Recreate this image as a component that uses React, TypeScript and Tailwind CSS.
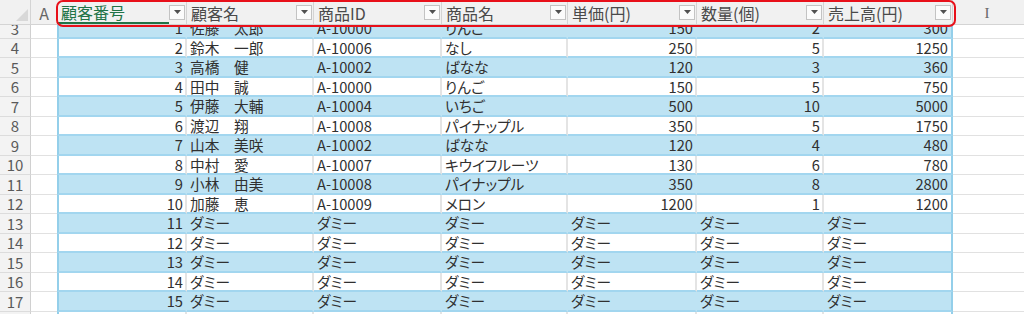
import React from "react";

type Col = { label: string; w: number; num: boolean };

const cols: Col[] = [
  { label: "顧客番号", w: 130, num: true },
  { label: "顧客名", w: 127, num: false },
  { label: "商品ID", w: 128, num: false },
  { label: "商品名", w: 126, num: false },
  { label: "単価(円)", w: 129, num: true },
  { label: "数量(個)", w: 127, num: true },
  { label: "売上高(円)", w: 129, num: true },
];

const data: (string | number)[][] = [
  [1, "佐藤　太郎", "A-10000", "りんご", 150, 2, 300],
  [2, "鈴木　一郎", "A-10006", "なし", 250, 5, 1250],
  [3, "高橋　健", "A-10002", "ばなな", 120, 3, 360],
  [4, "田中　誠", "A-10000", "りんご", 150, 5, 750],
  [5, "伊藤　大輔", "A-10004", "いちご", 500, 10, 5000],
  [6, "渡辺　翔", "A-10008", "パイナップル", 350, 5, 1750],
  [7, "山本　美咲", "A-10002", "ばなな", 120, 4, 480],
  [8, "中村　愛", "A-10007", "キウイフルーツ", 130, 6, 780],
  [9, "小林　由美", "A-10008", "パイナップル", 350, 8, 2800],
  [10, "加藤　恵", "A-10009", "メロン", 1200, 1, 1200],
  [11, "ダミー", "ダミー", "ダミー", "ダミー", "ダミー", "ダミー"],
  [12, "ダミー", "ダミー", "ダミー", "ダミー", "ダミー", "ダミー"],
  [13, "ダミー", "ダミー", "ダミー", "ダミー", "ダミー", "ダミー"],
  [14, "ダミー", "ダミー", "ダミー", "ダミー", "ダミー", "ダミー"],
  [15, "ダミー", "ダミー", "ダミー", "ダミー", "ダミー", "ダミー"],
];

const FONT =
  "[font-family:'Noto_Sans_CJK_JP','Noto_Sans',sans-serif] [font-feature-settings:'palt']";

function DropButton() {
  return (
    <div className="mr-[1px] flex h-[15px] w-[16px] shrink-0 items-center justify-center border border-[#c3c3c3] bg-[#fbfbfb]">
      <svg width="7" height="4" viewBox="0 0 7 4">
        <path d="M0 0 L7 0 L3.5 4 Z" fill="#505050" />
      </svg>
    </div>
  );
}

function HeaderRow() {
  return (
    <div className="relative z-10 flex h-[25px] shrink-0 border-b border-[#d4d4d4] bg-[#f1f1f1]">
      <div className="flex w-[31px] shrink-0 items-end justify-end border-r border-[#d4d4d4] pb-[3px] pr-[2px]">
        <svg width="12" height="12" viewBox="0 0 12 12">
          <path d="M12 0 L12 12 L0 12 Z" fill="#d8d8d8" />
        </svg>
      </div>
      <div className="flex w-[26px] shrink-0 items-center justify-center pt-[1px] text-[16px] text-[#666]">
        A
      </div>
      {cols.map((c, i) => (
        <div
          key={c.label}
          style={{ width: c.w }}
          className="flex shrink-0 items-center border-r border-[#d4d4d4]"
        >
          <div
            className={
              "flex h-full min-w-0 flex-1 items-center pl-[4px] pt-[2px] text-[16px] leading-none " +
              (i === 0
                ? "border-b-2 border-[#217346] text-[#217346]"
                : "text-[#4a4a4a]")
            }
          >
            {c.label}
          </div>
          <DropButton />
        </div>
      ))}
      <div className="flex w-[68px] shrink-0 items-center justify-center pt-[2px] [font-family:'Liberation_Serif',serif] text-[15px] text-[#666]">
        I
      </div>
      <div className="flex-1" />
    </div>
  );
}

function BodyRow({
  n,
  cells,
  blue,
}: {
  n: number;
  cells: (string | number)[] | null;
  blue: boolean;
}) {
  return (
    <div className="flex h-[19.5px] shrink-0">
      <div className="flex w-[31px] shrink-0 items-center justify-center border-b border-r border-[#dcdcdc] border-r-[#d0d0d0] bg-[#f3f3f3] text-[15px] leading-none text-[#5a5a5a]">
        {cells ? n : ""}
      </div>
      <div className="w-[26px] shrink-0 border-b border-[#e1e1e1] bg-white" />
      {cols.map((c, i) => {
        const v = cells ? cells[i] : "";
        const isNum = typeof v === "number";
        const first = i === 0;
        const last = i === cols.length - 1;
        return (
          <div
            key={i}
            style={{ width: c.w }}
            className={
              "flex shrink-0 items-center whitespace-nowrap border-b-2 border-r-2 border-b-[#a2d6ef] text-[14.7px] leading-none text-[#303030] " +
              (blue ? "bg-[#bee3f3] " : "bg-white ") +
              (last
                ? "border-r-[#94cfea] pr-[3px] "
                : blue
                ? "border-r-transparent pr-[2px] "
                : "border-r-[#e4e4e4] pr-[2px] ") +
              (first ? "border-l-2 border-l-[#94cfea] " : "") +
              (isNum ? "justify-end" : "justify-start pl-[3px]")
            }
          >
            <span className="pt-[2px]">{v}</span>
          </div>
        );
      })}
      <div className="flex-1 border-b border-[#e1e1e1] bg-white" />
    </div>
  );
}

export default function App() {
  return (
    <div
      className={
        "relative flex h-[314px] w-[1024px] flex-col overflow-hidden bg-white " +
        FONT
      }
    >
      <HeaderRow />
      <div className="flex min-h-0 flex-1 flex-col overflow-hidden">
        <div className="-mt-[6px] flex flex-col">
          {data.map((r, i) => (
            <BodyRow key={i} n={i + 3} cells={r} blue={i % 2 === 0} />
          ))}
          <BodyRow n={18} cells={null} blue={false} />
        </div>
      </div>
      <div className="pointer-events-none absolute left-[56px] top-0 z-20 h-[27px] w-[900px] rounded-[7px] border-2 border-[#e8101a]" />
    </div>
  );
}
